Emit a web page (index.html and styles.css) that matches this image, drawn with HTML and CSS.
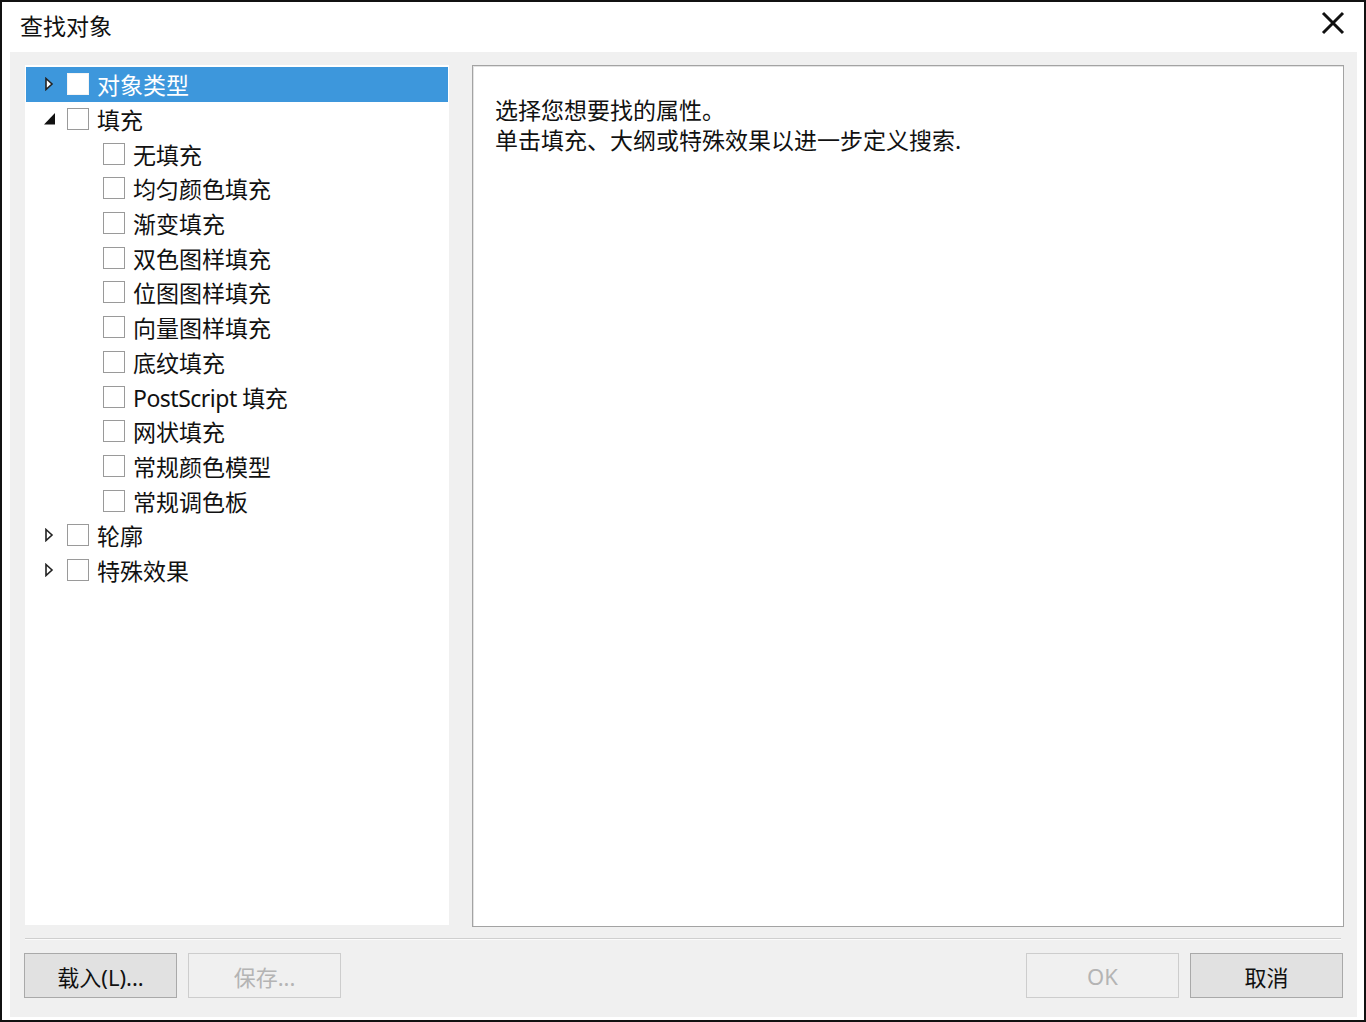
FILE: index.html
```html
<!DOCTYPE html>
<html lang="zh-CN">
<head>
<meta charset="utf-8">
<title>查找对象</title>
<link rel="stylesheet" href="styles.css">
</head>
<body>
<div class="window">
  <div class="titlebar">
    <span class="title">查找对象</span>
    <svg class="close" width="24" height="24" viewBox="0 0 24 24"><path d="M2 2 L22 22 M22 2 L2 22" stroke="#111" stroke-width="3" fill="none"/></svg>
  </div>
  <div class="body">
    <div class="panes">
      <div class="tree">
        <div class="row top selected">
          <svg class="twisty" width="14" height="14" viewBox="0 0 14 14"><polygon points="3,1.5 9,7 3,12.5" fill="#fff" stroke="#222" stroke-width="1.6"/></svg>
          <span class="cb"></span><span class="label">对象类型</span>
        </div>
        <div class="row top">
          <svg class="twisty" width="14" height="14" viewBox="0 0 14 14"><polygon points="12,1 12,12.5 1,12.5" fill="#111"/></svg>
          <span class="cb"></span><span class="label">填充</span>
        </div>
        <div class="row child"><span class="cb"></span><span class="label">无填充</span></div>
        <div class="row child"><span class="cb"></span><span class="label">均匀颜色填充</span></div>
        <div class="row child"><span class="cb"></span><span class="label">渐变填充</span></div>
        <div class="row child"><span class="cb"></span><span class="label">双色图样填充</span></div>
        <div class="row child"><span class="cb"></span><span class="label">位图图样填充</span></div>
        <div class="row child"><span class="cb"></span><span class="label">向量图样填充</span></div>
        <div class="row child"><span class="cb"></span><span class="label">底纹填充</span></div>
        <div class="row child"><span class="cb"></span><span class="label latin">PostScript 填充</span></div>
        <div class="row child"><span class="cb"></span><span class="label">网状填充</span></div>
        <div class="row child"><span class="cb"></span><span class="label">常规颜色模型</span></div>
        <div class="row child"><span class="cb"></span><span class="label">常规调色板</span></div>
        <div class="row top">
          <svg class="twisty" width="14" height="14" viewBox="0 0 14 14"><polygon points="3,1.5 9,7 3,12.5" fill="#fff" stroke="#222" stroke-width="1.6"/></svg>
          <span class="cb"></span><span class="label">轮廓</span>
        </div>
        <div class="row top">
          <svg class="twisty" width="14" height="14" viewBox="0 0 14 14"><polygon points="3,1.5 9,7 3,12.5" fill="#fff" stroke="#222" stroke-width="1.6"/></svg>
          <span class="cb"></span><span class="label">特殊效果</span>
        </div>
      </div>
      <div class="info">
        <p>选择您想要找的属性。</p>
        <p>单击填充、大纲或特殊效果以进一步定义搜索.</p>
      </div>
    </div>
    <div class="separator"></div>
    <div class="buttons">
      <div class="group">
        <button class="btn">载入(L)...</button>
        <button class="btn" disabled>保存...</button>
      </div>
      <div class="group">
        <button class="btn" disabled>OK</button>
        <button class="btn">取消</button>
      </div>
    </div>
  </div>
</div>
</body>
</html>
```

FILE: styles.css
```css
html, body {
  margin: 0;
  padding: 0;
  background: #fff;
}
body {
  font-family: "Noto Sans", "Noto Sans CJK SC", sans-serif;
  color: #111;
}
.window {
  width: 1366px;
  height: 1022px;
  box-sizing: border-box;
  border: 2px solid #111;
  background: #fff;
  display: flex;
  flex-direction: column;
}
.titlebar {
  height: 50px;
  flex: none;
  display: flex;
  align-items: center;
  justify-content: space-between;
  padding: 0 19px 0 18px;
}
.title {
  font-size: 23px;
  line-height: 28px;
  margin-top: -2px;
}
.close {
  margin-top: -8px;
}
.body {
  flex: 1;
  margin: 0 7px 3px 8px;
  background: #f0f0f0;
  padding: 13px 13px 0 15px;
  display: flex;
  flex-direction: column;
}
.panes {
  display: flex;
  gap: 23px;
  height: 862px;
  flex: none;
}
.tree {
  width: 424px;
  height: 860px;
  background: #fff;
  padding: 2px 1px 0 1px;
  box-sizing: border-box;
}
.row {
  height: 34.7px;
  display: flex;
  align-items: center;
  font-size: 23px;
  white-space: nowrap;
}
.row.selected {
  background: #3d97dc;
  color: #fff;
}
.row.top .twisty {
  margin-left: 17px;
  flex: none;
}
.row.top .cb {
  margin-left: 10px;
}
.row.child .cb {
  margin-left: 77px;
}
.cb {
  width: 20px;
  height: 20px;
  border: 1px solid #9a9a9a;
  background: #fff;
  flex: none;
}
.row.selected .cb {
  border-color: #f4f4f4;
}
.label {
  margin-left: 8px;
  line-height: 30px;
  margin-top: 2px;
}
.label.latin {
  letter-spacing: -0.5px;
}
.info {
  flex: 1;
  background: #fff;
  border: 1px solid #a3a3a3;
  box-shadow: inset 1px 1px 0 #e3e3e3;
  padding: 29px 22px;
  font-size: 23px;
  line-height: 30px;
}
.info p {
  margin: 0;
}
.separator {
  margin-top: 11px;
  margin-right: 3px;
  height: 1px;
  background: #cfcfcf;
  border-bottom: 1px solid #fbfbfb;
}
.buttons {
  margin: 13px 1px 0 -1px;
  display: flex;
  justify-content: space-between;
}
.group {
  display: flex;
  gap: 11px;
}
.btn {
  width: 153px;
  height: 45px;
  font-family: "Noto Sans", "Noto Sans CJK SC", sans-serif;
  font-size: 22px;
  color: #111;
  background: #e1e1e1;
  border: 1px solid #a9a9a9;
  padding: 0;
  margin: 0;
}
.btn:disabled {
  background: #f0f0f0;
  border-color: #cdcdcd;
  color: #b4b4b4;
}
```
